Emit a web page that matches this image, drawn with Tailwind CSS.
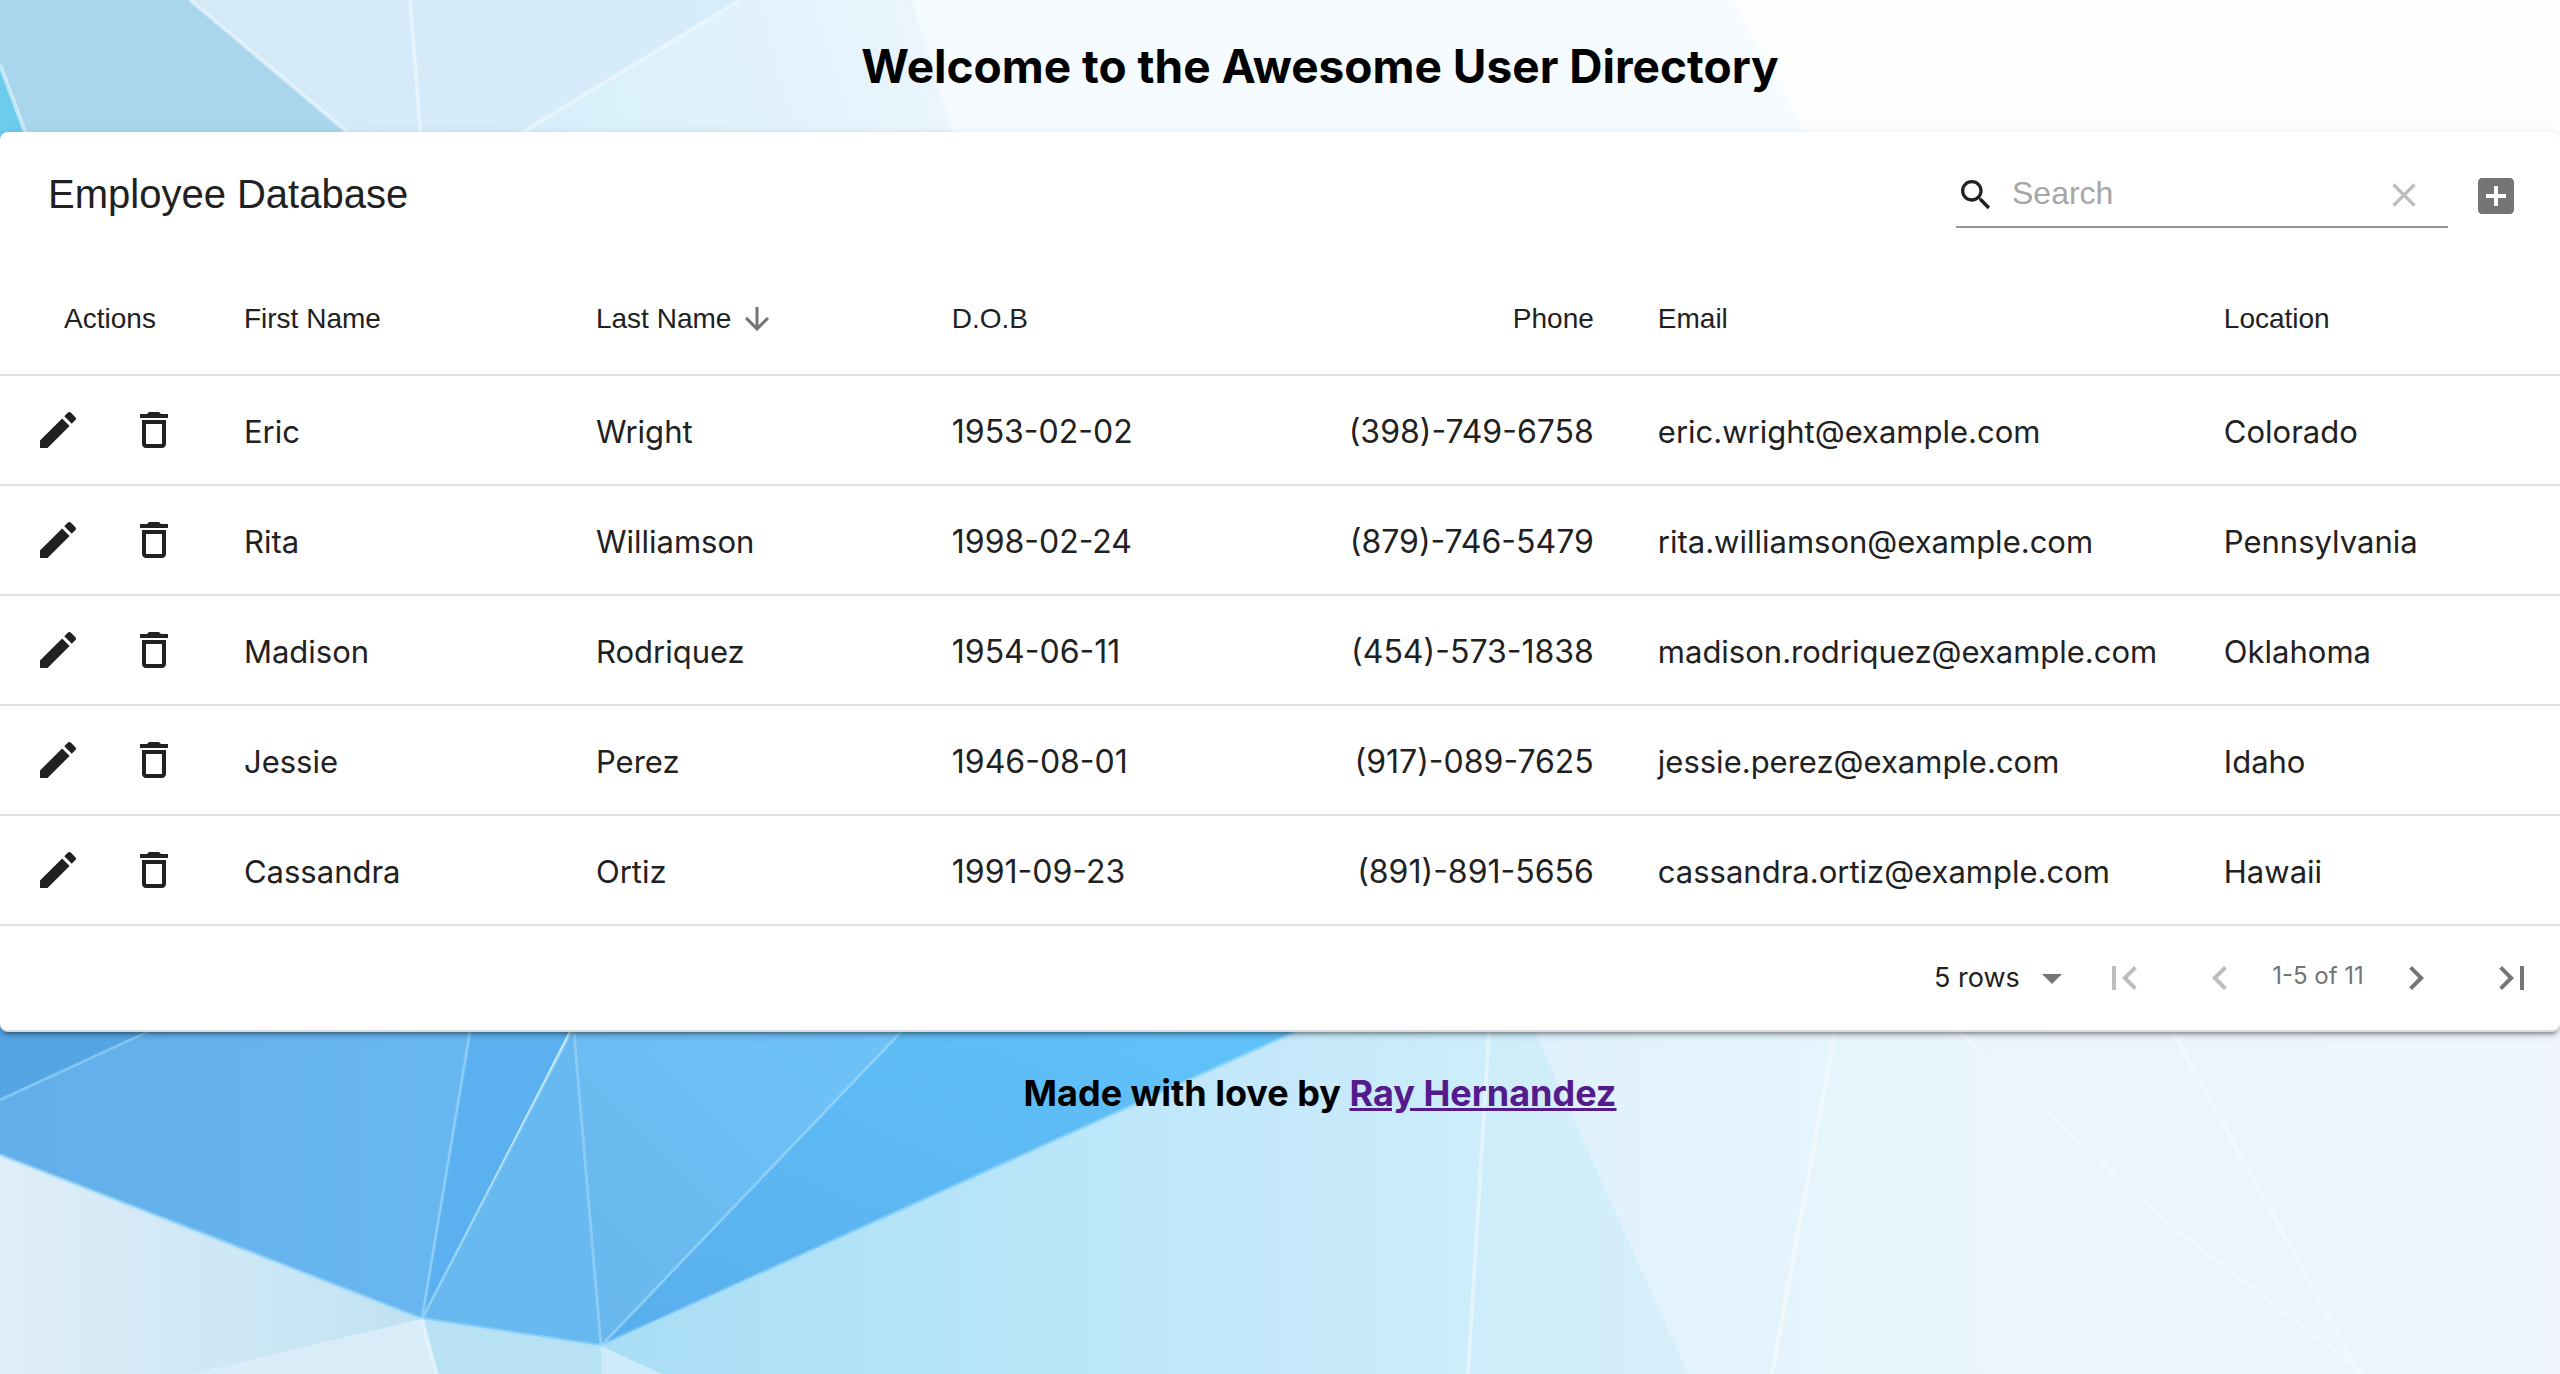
<!DOCTYPE html>
<html lang="en">
<head>
<meta charset="utf-8">
<meta name="viewport" content="width=device-width, initial-scale=1">
<title>Awesome User Directory</title>
<script src="https://cdn.jsdelivr.net/npm/@tailwindcss/browser@4"></script>
</head>
<body class="relative isolate min-h-screen overflow-x-hidden bg-[#e4f3fc] font-[Inter,sans-serif] text-[#212121]">

<!-- Faceted backdrop -->
<svg class="absolute inset-0 -z-10 h-full w-full" viewBox="0 0 2560 1374" preserveAspectRatio="none" aria-hidden="true">
  <defs>
    <linearGradient id="sky" gradientUnits="userSpaceOnUse" x1="300" y1="0" x2="740" y2="0"><stop offset="0" stop-color="#d4eaf7"/><stop offset="1" stop-color="#d7edfb"/></linearGradient>
    <linearGradient id="skyM" gradientUnits="userSpaceOnUse" x1="520" y1="132" x2="930" y2="0"><stop offset="0" stop-color="#d5effb"/><stop offset="1" stop-color="#ebf5fd"/></linearGradient>
    <linearGradient id="skyR" x1="0" y1="0" x2="1" y2="0"><stop offset="0" stop-color="#f4faff"/><stop offset=".5" stop-color="#fcfefe"/><stop offset="1" stop-color="#fcfdfe"/></linearGradient>
    <linearGradient id="b1" x1="0" y1="0" x2="1" y2="0"><stop offset="0" stop-color="#62aeea"/><stop offset="1" stop-color="#69b7f0"/></linearGradient>
    <linearGradient id="b2" x1="0" y1="1" x2="1" y2="0"><stop offset="0" stop-color="#68b6ec"/><stop offset="1" stop-color="#70c4fa"/></linearGradient>
    <linearGradient id="b3" x1="0" y1="1" x2="1" y2="0"><stop offset="0" stop-color="#58aeec"/><stop offset="1" stop-color="#62c5fb"/></linearGradient>
    <linearGradient id="l1" x1="0" y1="0" x2="1" y2="0"><stop offset="0" stop-color="#dfeef8"/><stop offset="1" stop-color="#c0e2f2"/></linearGradient>
    <linearGradient id="l2" x1="0" y1="0" x2="1" y2="0"><stop offset="0" stop-color="#a9def5"/><stop offset=".4" stop-color="#b9e5f9"/><stop offset=".65" stop-color="#c6e9fb"/><stop offset=".8" stop-color="#ccedf9"/><stop offset="1" stop-color="#d7effb"/></linearGradient>
    <linearGradient id="l3" x1="0" y1="0" x2="1" y2="0"><stop offset="0" stop-color="#dbeffd"/><stop offset=".2" stop-color="#dff1fd"/><stop offset=".35" stop-color="#e4f4fc"/><stop offset=".65" stop-color="#ecf5fc"/><stop offset="1" stop-color="#eff5fb"/></linearGradient>
  </defs>
  <g>
    <path fill="url(#sky)" d="M0 0H912L1000 280H0z"/>
    <path fill="url(#skyR)" d="M912 0H2560V280H1000z"/>
    <path fill="#f5fbfe" d="M912 0H1733L1804 132L1880 280H1000z"/>
    <path fill="url(#skyM)" d="M740 0H912L954 132L1000 280H280z"/>
    <path fill="#a9d6ec" d="M0 0H190L347 132L520 280H0z"/>
    <path fill="#6dcbec" d="M0 65L25 132L50 200H0z"/>
  </g>
  <g stroke="#f2fbff" stroke-opacity=".55" stroke-width="4" fill="none">
    <path d="M190 0L347 132M410 0L421 140M740 0L510 140M912 0L956 140M0 65L28 140"/>
  </g>
  <g>
    <path fill="url(#l3)" d="M1280 900H2560V1374H1280z"/>
    <path fill="url(#l2)" d="M601 1346L1296 1032L1500 900L1535 1032L1688 1374H601z"/>
    <path fill="url(#l1)" d="M0 1150L422 1319L192 1374H0z"/>
    <path fill="#d8edf8" d="M422 1319L437 1374H192z"/>
    <path fill="#b9e1f4" d="M422 1319L601 1346V1374H437z"/>
    <path fill="#cdebf8" d="M601 1346L662 1374H601z"/>
    <path fill="url(#b1)" d="M0 1000H475L422 1319L0 1155z"/>
    <path fill="#55a5e4" d="M0 1000H216L0 1100z"/>
    <path fill="#5bb1ef" d="M475 1000H585L422 1319z"/>
    <path fill="#69b9f1" d="M576 1000L601 1346L422 1319L571 1032z"/>
    <path fill="url(#b2)" d="M574 1000H932L601 1346z"/>
    <path fill="url(#b3)" d="M932 1000H1367L601 1346z"/>
  </g>
  <g stroke="#a5e0fb" stroke-opacity=".5" stroke-width="3" fill="none">
    <path d="M147 1032L0 1100M470 1032L422 1319M571 1032L422 1319M574 1032L601 1346M901 1032L601 1346"/>
    <path stroke-width="4" d="M0 1155L422 1319L601 1346L1300 1030"/>
  </g>
  <g stroke="#fafdff" stroke-opacity=".45" stroke-width="4" fill="none">
    <path d="M422 1319L437 1374M1489 1032L1468 1374M1835 1032L1772 1374M1960 1032L2170 1225L2365 1374M2173 1032L2360 1374"/>
  </g>
</svg>

<!-- Material glyphs shared by the rows -->
<svg class="hidden" aria-hidden="true">
  <symbol id="edit" viewBox="0 0 24 24"><path d="M3 17.25V21h3.75L17.81 9.94l-3.75-3.75L3 17.25zM20.71 7.04c.39-.39.39-1.02 0-1.41l-2.34-2.34c-.39-.39-1.02-.39-1.41 0l-1.83 1.83 3.75 3.75 1.83-1.83z"/></symbol>
  <symbol id="trash" viewBox="0 0 24 24"><path d="M6 19c0 1.1.9 2 2 2h8c1.1 0 2-.9 2-2V7H6v12zM8 9h8v10H8V9zm7.5-5l-1-1h-5l-1 1H5v2h14V4h-3.5z"/></symbol>
</svg>

<header class="flex h-[132px] items-center justify-center pl-20">
  <h1 class="text-[46px] leading-[60px] font-bold text-black">Welcome to the Awesome User Directory</h1>
</header>

<main class="rounded-lg border-b-2 border-[#dcdcdc] bg-white shadow-[0_6px_2px_-4px_rgba(0,0,0,0.2),0_4px_4px_0_rgba(0,0,0,0.14),0_2px_10px_0_rgba(0,0,0,0.12)]">
  <div class="flex h-32 items-center pr-4 pl-12 font-['Liberation_Sans',sans-serif]">
    <h2 class="pb-1 text-[40px] leading-[60px]">Employee Database</h2>
    <div class="ml-auto flex h-16 w-[492px] items-center border-b-2 border-[#949494]">
      <svg class="size-10 shrink-0 fill-[#212121]" viewBox="0 0 24 24" aria-hidden="true"><path d="M15.5 14h-.79l-.28-.27C15.41 12.59 16 11.11 16 9.5 16 5.91 13.09 3 9.5 3S3 5.91 3 9.5 5.91 16 9.5 16c1.61 0 3.09-.59 4.23-1.57l.27.28v.79l5 4.99L20.49 19l-4.99-5zm-6 0C7.01 14 5 11.99 5 9.5S7.01 5 9.5 5 14 7.01 14 9.5 11.99 14 9.5 14z"/></svg>
      <input type="text" placeholder="Search" aria-label="Search" class="ml-4 h-11 min-w-0 flex-1 bg-transparent pb-1 text-[32px] outline-none placeholder:text-[#a6a6a6]">
      <button type="button" aria-label="Clear search" class="flex w-[88px] justify-center"><svg class="size-10 fill-[#bdbdbd]" viewBox="0 0 24 24"><path d="M19 6.41L17.59 5 12 10.59 6.41 5 5 6.41 10.59 12 5 17.59 6.41 19 12 13.41 17.59 19 19 17.59 13.41 12z"/></svg></button>
    </div>
    <button type="button" aria-label="Add employee" class="p-6"><svg class="size-12 fill-[#757575]" viewBox="0 0 24 24"><path d="M19 3H5c-1.11 0-2 .9-2 2v14c0 1.1.89 2 2 2h14c1.1 0 2-.9 2-2V5c0-1.1-.9-2-2-2zm-2 10h-4v4h-2v-4H7v-2h4V7h2v4h4v2z"/></svg></button>
  </div>

  <table class="w-full table-fixed border-separate border-spacing-0 text-left">
    <colgroup>
      <col class="w-[8.28%]"><col class="w-[13.75%]"><col class="w-[13.9%]"><col class="w-[13.79%]"><col class="w-[13.79%]"><col class="w-[22.11%]"><col>
    </colgroup>
    <thead class="font-['Liberation_Sans',sans-serif] text-[28px] leading-10 *:*:border-b-2 *:*:border-[#e0e0e0]">
      <tr class="h-[116px]">
        <th scope="col" class="pt-1 pl-2 text-center font-normal">Actions</th>
        <th scope="col" class="px-8 pt-1 font-normal">First Name</th>
        <th scope="col" class="px-8 pt-1 font-normal" aria-sort="descending"><button type="button" class="flex items-center gap-2">Last Name<svg class="size-9 fill-[#757575]" viewBox="0 0 24 24" aria-hidden="true"><path d="M20 12l-1.41-1.41L13 16.17V4h-2v12.17l-5.58-5.59L4 12l8 8 8-8z"/></svg></button></th>
        <th scope="col" class="px-8 pt-1 font-normal">D.O.B</th>
        <th scope="col" class="px-8 pt-1 text-right font-normal">Phone</th>
        <th scope="col" class="px-8 pt-1 font-normal">Email</th>
        <th scope="col" class="px-8 pt-1 font-normal">Location</th>
      </tr>
    </thead>
    <tbody id="rows" class="leading-10 *:*:border-b-2 *:*:border-[#e0e0e0]"></tbody>
  </table>

  <div class="flex h-[104px] items-center justify-end">
    <div class="relative flex items-center">
      <select aria-label="Rows per page" class="w-[142px] appearance-none bg-transparent text-[27px] leading-10 outline-none">
        <option>5 rows</option><option>10 rows</option><option>20 rows</option>
      </select>
      <svg class="pointer-events-none absolute right-0 size-12 fill-[#757575]" viewBox="0 0 24 24" aria-hidden="true"><path d="M7 10l5 5 5-5z"/></svg>
    </div>
    <button type="button" disabled aria-label="First page" class="p-6"><svg class="size-12 fill-[#bdbdbd]" viewBox="0 0 24 24"><path d="M18.41 16.59L13.82 12l4.59-4.59L17 6l-6 6 6 6zM6 6h2v12H6z"/></svg></button>
    <button type="button" disabled aria-label="Previous page" class="p-6"><svg class="size-12 fill-[#bdbdbd]" viewBox="0 0 24 24"><path d="M15.41 7.41L14 6l-6 6 6 6 1.41-1.41L10.83 12z"/></svg></button>
    <span class="w-[100px] pb-1 text-center text-[24px] leading-10 whitespace-nowrap text-[#757575]">1-5 of 11</span>
    <button type="button" aria-label="Next page" class="p-6"><svg class="size-12 fill-[#757575]" viewBox="0 0 24 24"><path d="M10 6L8.59 7.41 13.17 12l-4.58 4.59L10 18l6-6z"/></svg></button>
    <button type="button" aria-label="Last page" class="p-6"><svg class="size-12 fill-[#757575]" viewBox="0 0 24 24"><path d="M5.59 7.41L10.18 12l-4.59 4.59L7 18l6-6-6-6zM16 6h2v12h-2z"/></svg></button>
  </div>
</main>

<footer class="flex justify-center pt-9 pl-20">
  <h2 class="text-[36px] leading-[50px] font-bold text-black">Made with love by <a href="#" class="text-[#551a8b] underline">Ray Hernandez</a></h2>
</footer>

<script>
  const people = [
    ["Eric", "Wright", "1953-02-02", "(398)-749-6758", "eric.wright@example.com", "Colorado"],
    ["Rita", "Williamson", "1998-02-24", "(879)-746-5479", "rita.williamson@example.com", "Pennsylvania"],
    ["Madison", "Rodriquez", "1954-06-11", "(454)-573-1838", "madison.rodriquez@example.com", "Oklahoma"],
    ["Jessie", "Perez", "1946-08-01", "(917)-089-7625", "jessie.perez@example.com", "Idaho"],
    ["Cassandra", "Ortiz", "1991-09-23", "(891)-891-5656", "cassandra.ortiz@example.com", "Hawaii"]
  ];
  const cell = ["text-[31px]", "text-[31px]", "text-[32px]", "text-[32px] text-right", "text-[31px]", "text-[31px]"];
  document.getElementById("rows").innerHTML = people.map(p => `
    <tr class="h-[110px]">
      <td class="p-0"><div class="flex justify-center">
        <button type="button" class="p-6" aria-label="Edit ${p[0]}"><svg class="size-12 fill-[#212121]"><use href="#edit"/></svg></button>
        <button type="button" class="p-6" aria-label="Delete ${p[0]}"><svg class="size-12 fill-[#212121]"><use href="#trash"/></svg></button>
      </div></td>
      ${p.map((t, i) => `<td class="px-8 pt-1 whitespace-nowrap ${cell[i]}">${t}</td>`).join("")}
    </tr>`).join("");
</script>
</body>
</html>
